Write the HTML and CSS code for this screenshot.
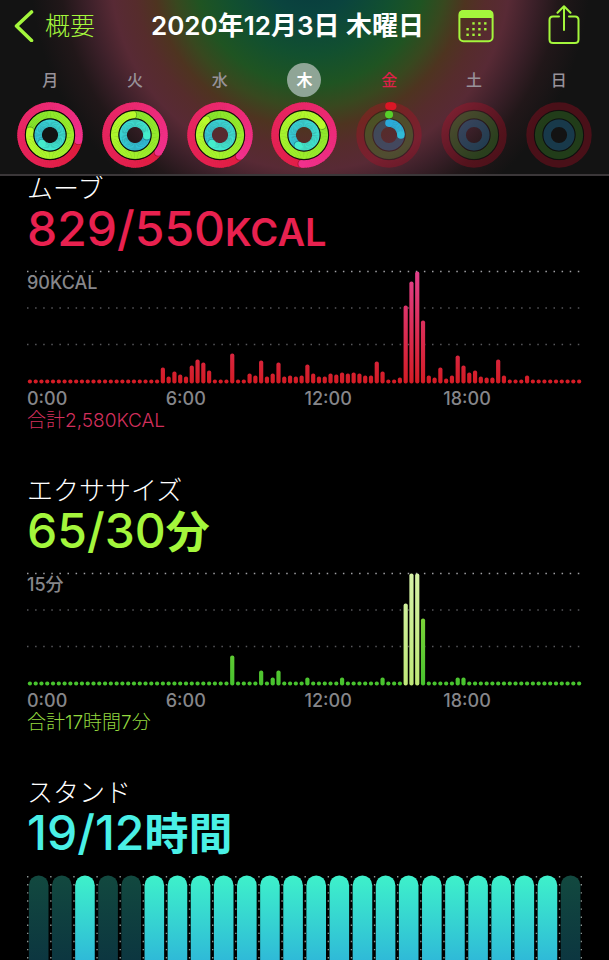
FILE: index.html
```html
<!DOCTYPE html>
<html lang="ja">
<head>
  <meta charset="UTF-8">
  <meta name="viewport" content="width=device-width, initial-scale=1">
  <title>アクティビティ</title>
  <link rel="stylesheet" href="styles.css">
</head>
<body>

  <header class="header">
    <nav class="topbar">
      <button class="back" type="button">
        <svg class="chevron" width="20" height="32" viewBox="0 0 20 32" aria-hidden="true">
          <path d="M17.5 2 L2.5 16 L17.5 30.5"/>
        </svg>
        概要
      </button>
      <h1 class="date">2020年12月3日 木曜日</h1>
      <button class="icon-btn calendar" type="button" aria-label="カレンダー">
        <svg width="36" height="34" viewBox="0 0 36 34">
          <rect class="line" x="1.4" y="1.9" width="33.2" height="30.4" rx="4"/>
          <path class="fill" d="M1 9 V5.5 Q1 1.2 5.3 1.2 H30.7 Q35 1.2 35 5.5 V9 Z"/>
          <g class="fill">
            <rect x="14.3" y="13.2" width="2.4" height="2.4"/><rect x="20.2" y="13.2" width="2.4" height="2.4"/><rect x="26.1" y="13.2" width="2.4" height="2.4"/>
            <rect x="8.4" y="19" width="2.4" height="2.4"/><rect x="14.3" y="19" width="2.4" height="2.4"/><rect x="20.2" y="19" width="2.4" height="2.4"/><rect x="26.1" y="19" width="2.4" height="2.4"/>
            <rect x="8.4" y="24.6" width="2.4" height="2.4"/><rect x="14.3" y="24.6" width="2.4" height="2.4"/><rect x="20.2" y="24.6" width="2.4" height="2.4"/>
          </g>
        </svg>
      </button>
      <button class="icon-btn share" type="button" aria-label="共有">
        <svg width="32" height="42" viewBox="0 0 32 42">
          <path class="line" d="M11 11.5 H5 Q1.5 11.5 1.5 15 V34.5 Q1.5 38 5 38 H27 Q30.5 38 30.5 34.5 V15 Q30.5 11.5 27 11.5 H21"/>
          <path class="line" d="M16 25 V1.2 M9.5 7.7 L16 1.2 L22.5 7.7"/>
        </svg>
      </button>
    </nav>

    <div class="week" id="week"></div>
  </header>

  <main class="content">
    <section class="metric move">
      <h2>ムーブ</h2>
      <p class="value">829/550<span class="unit">KCAL</span></p>
      <div class="chart">
        <span class="scale">90KCAL</span>
        <svg id="moveChart" viewBox="0 0 555 114" preserveAspectRatio="none"></svg>
      </div>
      <div class="hours"><span>0:00</span><span>6:00</span><span>12:00</span><span>18:00</span></div>
      <p class="total">合計2,580KCAL</p>
    </section>

    <section class="metric exercise">
      <h2>エクササイズ</h2>
      <p class="value">65/30<span class="kanji">分</span></p>
      <div class="chart">
        <span class="scale">15分</span>
        <svg id="exerciseChart" viewBox="0 0 555 114" preserveAspectRatio="none"></svg>
      </div>
      <div class="hours"><span>0:00</span><span>6:00</span><span>12:00</span><span>18:00</span></div>
      <p class="total">合計17時間7分</p>
    </section>

    <section class="metric stand">
      <h2>スタンド</h2>
      <p class="value">19/12<span class="kanji">時間</span></p>
      <div class="chart">
        <svg id="standChart" viewBox="0 0 555 114" preserveAspectRatio="none"></svg>
      </div>
    </section>
  </main>

  <script src="script.js"></script>
</body>
</html>
```

FILE: styles.css
```css
* {
  box-sizing: border-box;
}

body {
  margin: 0;
  height: 100vh;
  display: flex;
  flex-direction: column;
  overflow: hidden;
  background: #000;
  color: #fff;
  font-family: Inter, "Noto Sans CJK JP", sans-serif;
}

h1, h2, p {
  margin: 0;
}

button {
  padding: 0;
  border: none;
  background: none;
  color: #a4f63c;
  font-family: inherit;
  cursor: pointer;
}

/* Header */
.header {
  flex: none;
  border-bottom: 2px solid #3b3739;
  background: radial-gradient(circle 250px at 51% -30px,
    #08383e 0%,
    #0a443e 18%,
    #12502f 34%,
    #1f5422 46%,
    #38481f 55%,
    #4e3420 63%,
    #562c2c 71%,
    #582a35 80%,
    #3c2029 90%,
    #211719 100%,
    #131313 112%);
}

.topbar {
  display: flex;
  align-items: center;
  height: 52px;
  padding: 0 29px 0 14px;
}

.back {
  display: flex;
  align-items: center;
  gap: 11px;
  margin-right: 56px;
  font-size: 25px;
  font-weight: 300;
  line-height: 32px;
}

.chevron path {
  fill: none;
  stroke: #a4f63c;
  stroke-width: 3.6;
  stroke-linecap: round;
  stroke-linejoin: round;
}

.date {
  font-size: 26px;
  font-weight: 600;
  line-height: 32px;
  white-space: nowrap;
}

.icon-btn {
  display: flex;
}

.calendar {
  margin-left: 34px;
}

.share {
  margin-left: auto;
}

.icon-btn .line {
  fill: none;
  stroke: #a4f63c;
  stroke-width: 2;
  stroke-linecap: round;
  stroke-linejoin: round;
}

.icon-btn .fill {
  fill: #a4f63c;
}

/* Week rings */
.week {
  display: grid;
  grid-template-columns: repeat(7, 1fr);
  padding: 11px 8px 5px;
}

.day {
  display: flex;
  flex-direction: column;
  align-items: center;
  gap: 4px;
}

.day-name {
  width: 34px;
  height: 34px;
  border-radius: 50%;
  color: #98929a;
  font-size: 16px;
  font-weight: 500;
  line-height: 34px;
  text-align: center;
}

.day-name.selected {
  background: #8fa596;
  color: #fff;
  font-weight: 700;
}

.day-name.today {
  color: #dc2148;
}

.rings {
  display: block;
  width: 68px;
  height: 68px;
}

/* Metrics */
.content {
  flex: 1;
  min-height: 0;
  overflow: hidden;
  padding: 0 27px;
}

.metric {
  padding-bottom: 46px;
}

.metric h2 {
  font-size: 26px;
  font-weight: 300;
  line-height: 26px;
}

.value {
  font-size: 48px;
  font-weight: 500;
  line-height: 54px;
  white-space: nowrap;
}

.value span {
  line-height: 1;
}

.unit {
  font-size: 38px;
  font-weight: 600;
}

.kanji {
  font-size: 44px;
  font-weight: 600;
}

.chart {
  position: relative;
  margin-top: 14px;
}

.chart svg {
  display: block;
  width: 100%;
  height: 114px;
}

.scale {
  position: absolute;
  top: 3px;
  left: 0;
  color: #86868a;
  font-size: 18px;
  font-weight: 500;
  line-height: 20px;
}

.hours {
  display: grid;
  grid-template-columns: repeat(4, 1fr);
  margin-top: 4px;
  color: #86868a;
  font-size: 18px;
  font-weight: 500;
  line-height: 22px;
}

.total {
  font-size: 19px;
  font-weight: 300;
  line-height: 22px;
}

.move .value {
  color: #e8214f;
}

.move .total {
  color: #d22f5c;
}

.exercise .value {
  color: #a4f63c;
}

.exercise .total {
  color: #93d83f;
}

.stand .value {
  color: #4af0e6;
}
```

FILE: script.js
```js
const SVG = "http://www.w3.org/2000/svg";

function add(parent, tag, attrs) {
  const el = document.createElementNS(SVG, tag);
  for (const key in attrs) el.setAttribute(key, attrs[key]);
  parent.appendChild(el);
  return el;
}

// ---- Rings ----
const rings = [
  { r: 28.9, from: [218, 22, 36], to: [240, 48, 140], track: "rgba(200,10,35,0.3)" },
  { r: 20.4, from: [88, 208, 42], to: [184, 250, 44], track: "rgba(65,150,40,0.32)" },
  { r: 11.9, from: [42, 170, 218], to: [68, 236, 204], track: "rgba(35,120,165,0.38)" }
];

// laps of move, exercise and stand
const days = [
  { name: "月", laps: [1.28, 1.78, 1.62] },
  { name: "火", laps: [1.35, 1.98, 1.26] },
  { name: "水", laps: [1.38, 1.88, 1.62] },
  { name: "木", laps: [1.51, 2.17, 1.58], state: "selected" },
  { name: "金", laps: [0.02, 0.001, 0.25], state: "today" },
  { name: "土", laps: [0, 0, 0] },
  { name: "日", laps: [0, 0, 0] }
];

function point(r, t) {
  const a = t * 2 * Math.PI;
  return [34 + r * Math.sin(a), 34 - r * Math.cos(a)];
}

function mix(a, b, k) {
  return "rgb(" + a.map((v, i) => Math.round(v + (b[i] - v) * k)).join(",") + ")";
}

function drawRing(svg, ring, laps) {
  add(svg, "circle", { cx: 34, cy: 34, r: ring.r, fill: "none", stroke: ring.track, "stroke-width": 7.6 });
  if (!laps) return;

  const start = Math.max(0, laps - 1);
  const steps = Math.max(1, Math.round((laps - start) * 90));
  const step = (laps - start) / steps;
  const scale = Math.max(1, laps);
  if (start === 0) {
    const [x, y] = point(ring.r, 0);
    add(svg, "circle", { cx: x, cy: y, r: 3.8, fill: mix(ring.from, ring.to, 0) });
  }
  for (let i = 0; i < steps; i++) {
    const t = start + i * step;
    const [x1, y1] = point(ring.r, t);
    const [x2, y2] = point(ring.r, t + step * 1.3);
    add(svg, "path", {
      d: `M${x1} ${y1} A${ring.r} ${ring.r} 0 0 1 ${x2} ${y2}`,
      fill: "none", stroke: mix(ring.from, ring.to, t / scale), "stroke-width": 7.6
    });
  }
  // rounded tip with a soft shadow ahead of it
  if (laps > 1) {
    const [sx, sy] = point(ring.r, laps + 0.9 / (ring.r * 6.28));
    add(svg, "circle", { cx: sx, cy: sy, r: 3.8, fill: "rgba(0,0,0,0.25)" });
  }
  const [x, y] = point(ring.r, laps);
  add(svg, "circle", { cx: x, cy: y, r: 3.8, fill: mix(ring.from, ring.to, laps / scale) });
}

const week = document.getElementById("week");
days.forEach(day => {
  const cell = document.createElement("div");
  cell.className = "day";
  const name = document.createElement("span");
  name.className = "day-name " + (day.state || "");
  name.textContent = day.name;
  cell.appendChild(name);
  const svg = add(cell, "svg", { class: "rings", viewBox: "0 0 68 68" });
  rings.forEach((ring, i) => drawRing(svg, ring, day.laps[i]));
  [24.65, 16.15].forEach(r => {
    add(svg, "circle", { cx: 34, cy: 34, r: r, fill: "none", stroke: day.laps[0] > 1 ? "rgba(0,0,0,0.75)" : "rgba(0,0,0,0.25)", "stroke-width": 1.1 });
  });
  week.appendChild(cell);
});

// ---- Quarter-hour charts ----
const move = [
  4,4,4,4,4,4,4,4,4,4,4,4,4,4,4,4,4,4,4,4,4,4,4,16,
  7,12,9,7,18,24,21,13,4,4,4,30,4,4,10,8,23,7,10,21,7,8,7,8,
  19,10,7,7,10,9,11,10,11,10,8,8,22,12,4,4,6,78,102,112,63,8,6,16,
  5,8,28,18,11,13,7,6,6,24,8,4,4,4,8,4,4,4,4,4,4,4,4,4
];

const exercise = new Array(96).fill(4);
Object.assign(exercise, { 35: 30, 40: 15, 42: 8, 43: 15, 48: 8, 54: 8, 61: 8, 65: 82, 66: 112, 67: 112, 68: 67, 74: 8, 75: 8 });

function gradient(svg, id, top, bottom) {
  const g = add(add(svg, "defs", {}), "linearGradient", { id: id, gradientUnits: "userSpaceOnUse", x1: 0, y1: 0, x2: 0, y2: 114 });
  add(g, "stop", { offset: 0, "stop-color": top });
  add(g, "stop", { offset: 1, "stop-color": bottom });
}

function quarterChart(id, data, top, bottom) {
  const svg = document.getElementById(id);
  gradient(svg, id + "Fill", top, bottom);
  gradient(svg, id + "Peak", "#d6f2a8", "#bfe878");
  [1.5, 38, 74.5].forEach((y, i) => {
    add(svg, "line", { x1: 0, x2: 553, y1: y, y2: y, stroke: i ? "#57575b" : "#a0a0a4", "stroke-width": 1.5, "stroke-dasharray": "1.5 6.6" });
  });
  const pitch = 555 / 96;
  data.forEach((h, i) => {
    const peak = id === "exerciseChart" && h > 80;
    add(svg, "rect", {
      x: pitch * i + 0.8, y: 113.5 - h, width: 4.2, height: h, rx: 2,
      fill: `url(#${id}${peak ? "Peak" : "Fill"})`
    });
  });
}

quarterChart("moveChart", move, "#e2408c", "#d41c24");
quarterChart("exerciseChart", exercise, "#a0e040", "#46c22e");

// ---- Stand hours ----
const idleHours = [0, 1, 3, 4, 23];
const stand = document.getElementById("standChart");
gradient(stand, "standOn", "#3ef2ca", "#2aa8dc");
gradient(stand, "standOff", "#12493f", "#0a3040");
for (let i = 0; i <= 24; i++) {
  const x = Math.min(554.3, 0.7 + i * 23.125);
  add(stand, "line", { x1: x, x2: x, y1: 2, y2: 114, stroke: "#8c9694", "stroke-width": 1.4, "stroke-dasharray": "1.4 6.7" });
}
for (let i = 0; i < 24; i++) {
  add(stand, "rect", {
    x: i * 23.125 + 1.9, y: 1.5, width: 19.6, height: 130, rx: 9.8,
    fill: idleHours.includes(i) ? "url(#standOff)" : "url(#standOn)"
  });
}
```
